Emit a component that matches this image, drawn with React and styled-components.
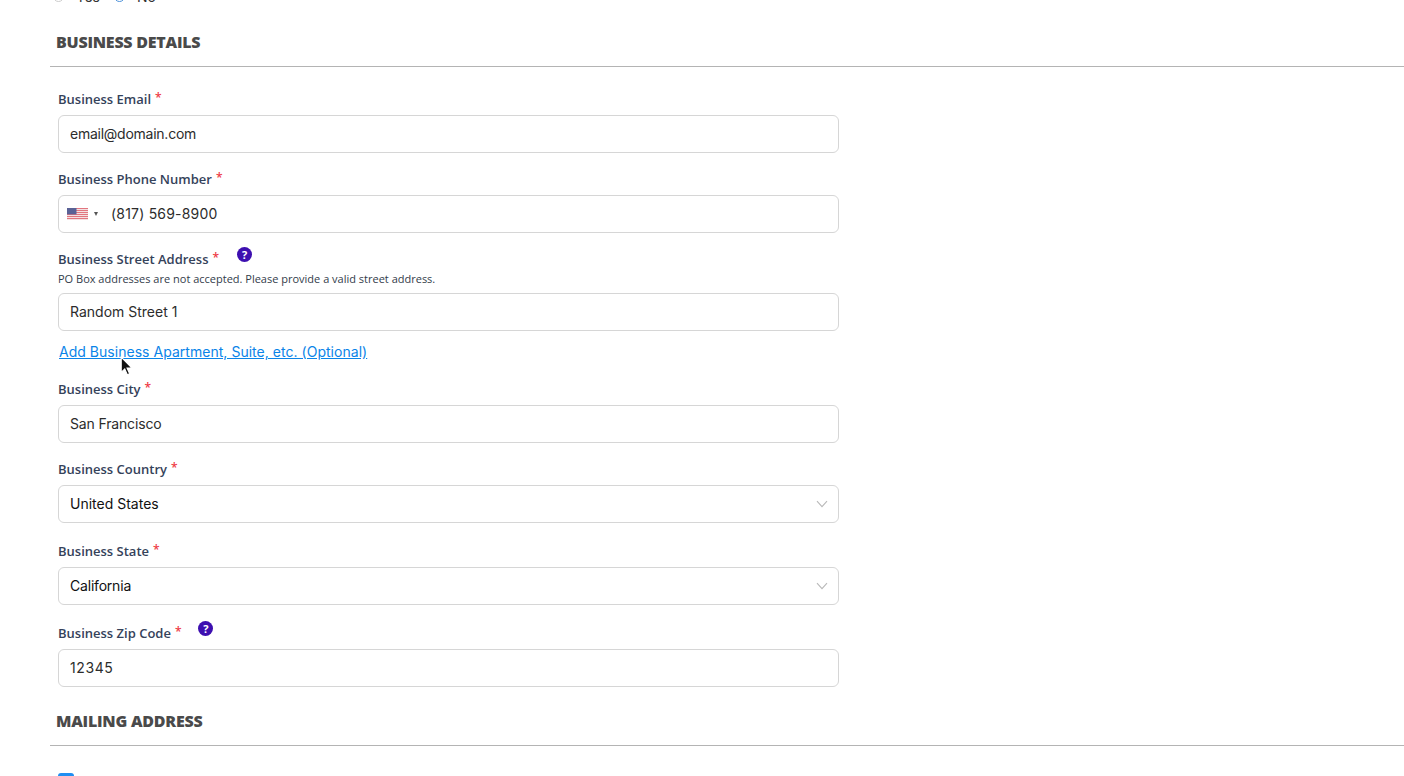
import React from "react";
import styled, { createGlobalStyle } from "styled-components";

const Global = createGlobalStyle`
  html, body { margin: 0; padding: 0; background: #fff; }
  body { width: 1404px; height: 776px; overflow: hidden; }
`;

const Page = styled.main`
  position: relative;
  height: 776px;
  overflow: hidden;
  padding-left: 50px;
  box-sizing: border-box;
  background: #fff;
`;

const RadioRow = styled.div`
  display: flex;
  align-items: center;
  height: 16px;
  margin-top: -12px;
  padding-left: 3px;
  font: 400 14px Inter, sans-serif;
  color: #333;
`;

const Radio = styled.span`
  width: 11px;
  height: 11px;
  border-radius: 50%;
  box-sizing: border-box;
  border: 1px solid ${(p) => (p.$on ? "#4a90d9" : "#ccc")};
  margin-left: ${(p) => (p.$on ? "14px" : "0")};
  margin-right: 12px;
`;

const SectionHead = styled.h2`
  margin: 0;
  padding: ${(p) => (p.$first ? "27px" : "23px")} 0 13px 6px;
  font: 800 16px/22px "Open Sans", sans-serif;
  letter-spacing: -0.24px;
  color: #4a4a4a;
  border-bottom: 1px solid #b4b4b4;
`;

const Form = styled.div`
  width: 781px;
  margin-left: 8px;
  padding-top: 22px;
`;

const Field = styled.div`
  margin-bottom: ${(p) => p.$gap ?? 16}px;
`;

const LabelRow = styled.div`
  display: flex;
  align-items: center;
  height: 20px;
  margin-bottom: ${(p) => (p.$hint ? 0 : 6)}px;
`;

const Label = styled.label`
  font: 600 13px/20px "Open Sans", sans-serif;
  color: #35425a;
`;

const Star = styled.span`
  color: #ee3a45;
  font: 600 12px/20px "Open Sans", sans-serif;
  margin-left: 4px;
  position: relative;
  top: -1px;
`;

const Help = styled.span`
  display: inline-flex;
  align-items: center;
  justify-content: center;
  width: 15px;
  height: 15px;
  border-radius: 50%;
  background: #3d0fb0;
  color: #fff;
  font: 700 11px/15px "Open Sans", sans-serif;
  margin-left: ${(p) => p.$left}px;
  position: relative;
  top: -5px;
`;

const Hint = styled.div`
  font: 400 11px/14px "Open Sans", sans-serif;
  color: #333c4a;
  margin: 3px 0 7px;
`;

const Box = styled.div`
  display: flex;
  align-items: center;
  height: 38px;
  box-sizing: border-box;
  padding: 0 11px;
  border: 1px solid #d6d6d6;
  border-radius: 6px;
  font: 400 14px/20px Inter, sans-serif;
  letter-spacing: ${(p) => p.$track || 0}px;
  color: ${(p) => (p.$dark ? "#111" : "#2c2c2c")};
  background: #fff;
`;

const PhoneBox = styled(Box)`
  padding-left: 8px;
`;

const Caret = styled.span`
  width: 0;
  height: 0;
  margin: 0 13px 0 6px;
  border-left: 2.5px solid transparent;
  border-right: 2.5px solid transparent;
  border-top: 4px solid #555;
`;

const Chevron = styled.svg`
  margin-left: auto;
  margin-right: -1px;
`;

const LinkRow = styled.a`
  display: block;
  width: fit-content;
  margin: 11px 0 17px 1px;
  font: 400 14px/20px Inter, sans-serif;
  letter-spacing: 0.03px;
  color: #0a84e8;
  text-decoration: underline;
`;

const Check = styled.span`
  position: absolute;
  left: 58px;
  top: 773px;
  width: 16px;
  height: 16px;
  border-radius: 3px;
  background: #1f8ef1;
`;

const Cursor = styled.svg`
  position: absolute;
  left: 120px;
  top: 356px;
`;

const Flag = () => (
  <svg width="21" height="12" viewBox="0 0 21 12">
    <rect width="21" height="12" fill="#f6eeee" />
    {[0, 2, 4, 6, 8, 10].map((y) => (
      <rect key={y} y={y} width="21" height="1.1" fill="#e2767f" />
    ))}
    <rect width="9.5" height="6.4" fill="#5a6296" />
  </svg>
);

const Down = () => (
  <Chevron width="12" height="8" viewBox="0 0 12 8" fill="none">
    <path d="M1 1.2 6 6.6 11 1.2" stroke="#b9b9b9" strokeWidth="1.1" />
  </Chevron>
);

const Req = ({ children, help }) => (
  <>
    <Label>{children}</Label>
    <Star>*</Star>
    {help ? <Help $left={help}>?</Help> : null}
  </>
);

export default function App() {
  return (
    <Page>
      <Global />
      <RadioRow>
        <Radio />
        Yes
        <Radio $on />
        No
      </RadioRow>
      <SectionHead $first>BUSINESS DETAILS</SectionHead>
      <Form>
        <Field>
          <LabelRow><Req>Business Email</Req></LabelRow>
          <Box $track={-0.25}>email@domain.com</Box>
        </Field>
        <Field>
          <LabelRow><Req>Business Phone Number</Req></LabelRow>
          <PhoneBox $track={0.2}><Flag /><Caret />(817) 569-8900</PhoneBox>
        </Field>
        <Field $gap={1}>
          <LabelRow $hint><Req help={18}>Business Street Address</Req></LabelRow>
          <Hint>PO Box addresses are not accepted. Please provide a valid street address.</Hint>
          <Box>Random Street 1</Box>
        </Field>
        <LinkRow>Add Business Apartment, Suite, etc. (Optional)</LinkRow>
        <Field>
          <LabelRow><Req>Business City</Req></LabelRow>
          <Box $track={-0.15}>San Francisco</Box>
        </Field>
        <Field $gap={18}>
          <LabelRow><Req>Business Country</Req></LabelRow>
          <Box $dark>United States<Down /></Box>
        </Field>
        <Field $gap={18}>
          <LabelRow><Req>Business State</Req></LabelRow>
          <Box $dark $track={-0.2}>California<Down /></Box>
        </Field>
        <Field $gap={0}>
          <LabelRow><Req help={17}>Business Zip Code</Req></LabelRow>
          <Box $track={0.6}>12345</Box>
        </Field>
      </Form>
      <SectionHead>MAILING ADDRESS</SectionHead>
      <Check />
      <Cursor width="13" height="20" viewBox="0 0 11 17">
        <path d="M1 1v13l3-3 2.2 5 2-.9L6 10.300h4.200z" fill="#111" stroke="#fff" strokeWidth="1" />
      </Cursor>
    </Page>
  );
}
